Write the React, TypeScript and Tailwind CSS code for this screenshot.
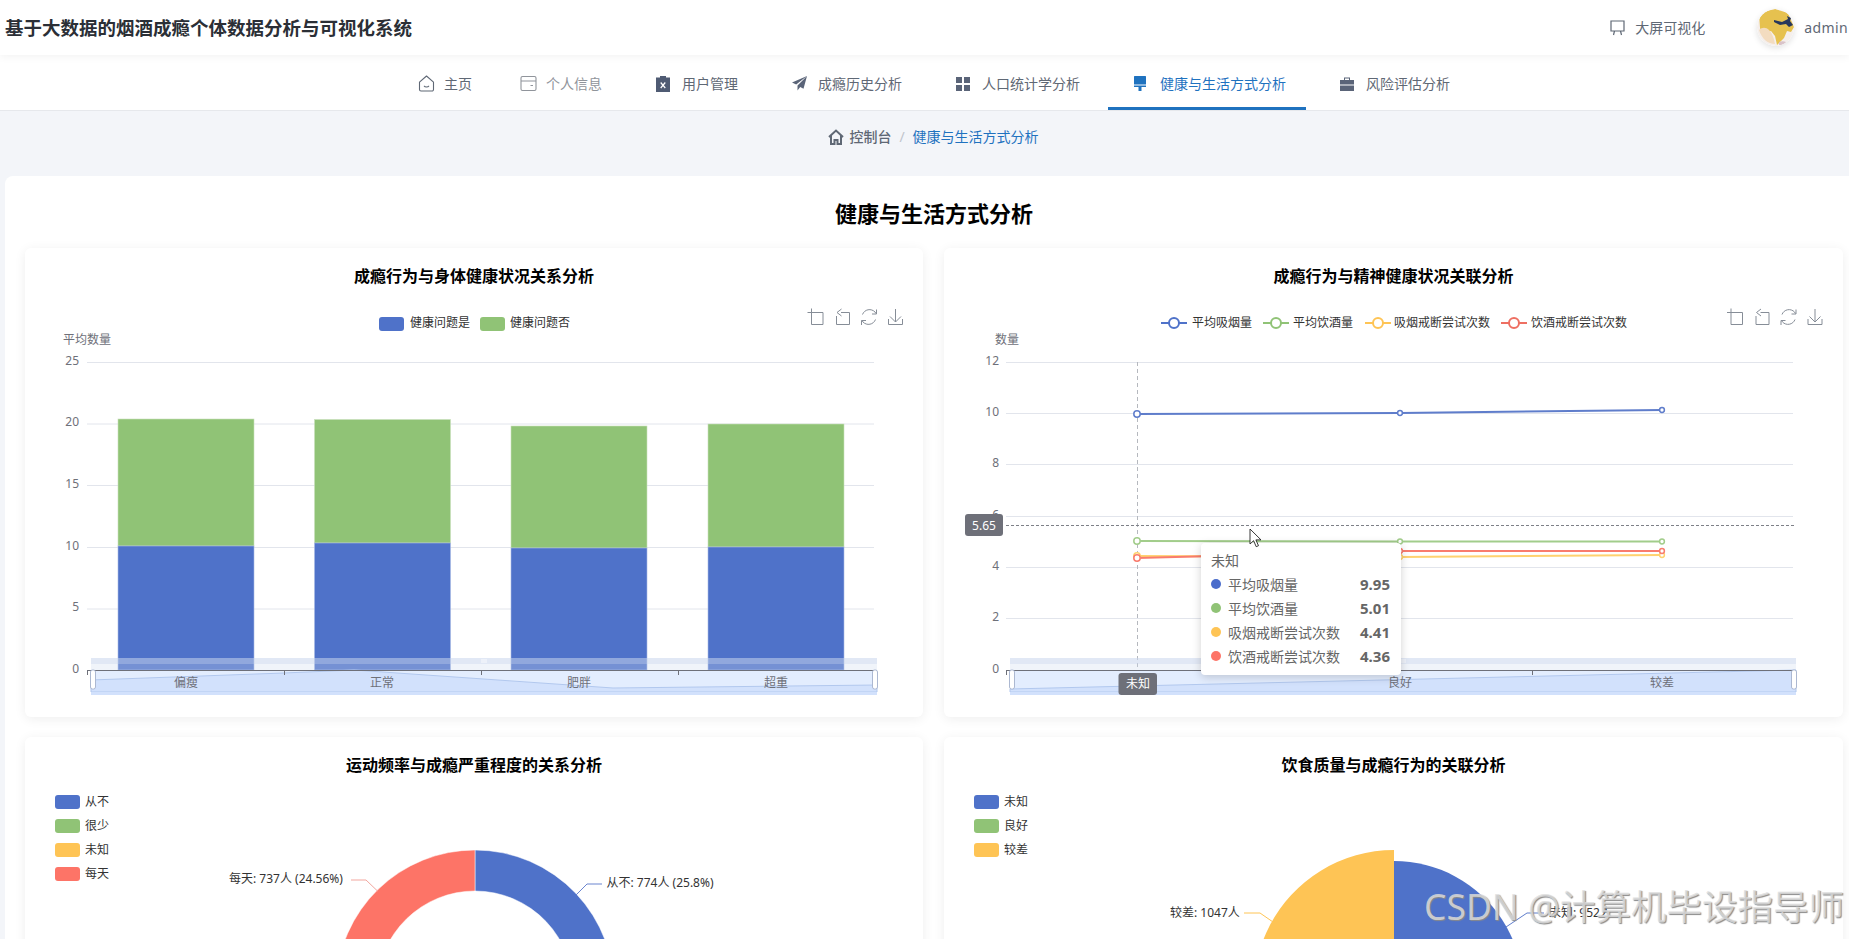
import React from "react";

const BLUE = "#4f72c9";
const GREEN = "#90c376";
const YELLOW = "#fec455";
const RED = "#fd7467";
const AXIS = "#6e7079";

function arc(cx: number, cy: number, R: number, r: number, a0: number, a1: number) {
  const p = (rad: number, a: number) => {
    const t = (a * Math.PI) / 180;
    return `${(cx + rad * Math.sin(t)).toFixed(2)} ${(cy - rad * Math.cos(t)).toFixed(2)}`;
  };
  const large = a1 - a0 > 180 ? 1 : 0;
  if (r === 0) return `M${cx} ${cy} L${p(R, a0)} A${R} ${R} 0 ${large} 1 ${p(R, a1)} Z`;
  return `M${p(R, a0)} A${R} ${R} 0 ${large} 1 ${p(R, a1)} L${p(r, a1)} A${r} ${r} 0 ${large} 0 ${p(r, a0)} Z`;
}

const Label = ({ x, y, children, anchor = "start", fill = "#333", white = false }: { x: number; y: number; children: React.ReactNode; anchor?: "start" | "middle" | "end"; fill?: string; white?: boolean }) => (
  <text x={x} y={y - 1} textAnchor={anchor} dominantBaseline="central" fill={white ? "#fff" : fill} className="text-[12px]">
    {children}
  </text>
);

const HomeIcon = () => (
  <svg width="17" height="17" viewBox="0 0 17 17" fill="none" stroke="currentColor" strokeWidth="1.1">
    <path d="M1.5 7.2 8.5 1l7 6.2v7.3a1.5 1.5 0 0 1-1.5 1.5H3a1.5 1.5 0 0 1-1.5-1.5z" strokeLinejoin="round" />
    <path d="M6.3 11.2c.6 1 3.8 1 4.4 0" strokeLinecap="round" />
  </svg>
);
const WalletIcon = () => (
  <svg width="17" height="17" viewBox="0 0 17 17" fill="none" stroke="currentColor" strokeWidth="1.1">
    <rect x="1" y="1.5" width="15" height="14" rx="1.5" />
    <path d="M1 6h15M10.5 10.5H13" />
  </svg>
);
const ClipIcon = () => (
  <svg width="14" height="17" viewBox="0 0 14 17">
    <path d="M0 2.5h4V1h6v1.5h4V17H0z" fill="#4f5b73" />
    <path d="M4.7 7.5l4.6 5.5M9.3 7.5l-4.6 5.5" stroke="#fff" strokeWidth="1.2" />
  </svg>
);
const PlaneIcon = () => (
  <svg width="15" height="15" viewBox="0 0 15 15" fill="#5a6478">
    <path d="M15 0 0 6.5l4.2 2L15 0zM15 0 5.5 9.5V14.5l2.7-3.4 3.3 1.6z" />
  </svg>
);
const GridIcon = () => (
  <svg width="14" height="14" viewBox="0 0 14 14" fill="#5a6478">
    <rect width="6" height="6" />
    <rect x="8" width="6" height="6" />
    <rect y="8" width="6" height="6" />
    <rect x="8" y="8" width="6" height="6" />
  </svg>
);
const BrushIcon = () => (
  <svg width="12" height="15" viewBox="0 0 12 15" fill="#1f72bf">
    <rect width="12" height="8.5" rx="0.5" />
    <rect y="9.5" width="12" height="1.5" />
    <path d="M4.5 11h3v4h-3z" />
  </svg>
);
const CaseIcon = () => (
  <svg width="14" height="14" viewBox="0 0 14 14" fill="#5a6478">
    <path d="M4 3V.5h6V3H9V1.5H5V3z" />
    <path d="M0 3h14v4.6H0zM0 8.6h14V14H0z" />
  </svg>
);

const navItems: { label: string; icon: React.ReactNode; cls: string; active?: boolean }[] = [
  { label: "主页", icon: <HomeIcon />, cls: "text-[#5f6875] mr-[-6px] pt-[2px]" },
  { label: "个人信息", icon: <WalletIcon />, cls: "text-[#90949b] pt-[2px]" },
  { label: "用户管理", icon: <ClipIcon />, cls: "text-[#5f6875] pt-[2px]" },
  { label: "成瘾历史分析", icon: <PlaneIcon />, cls: "text-[#5f6875] pt-[2px]" },
  { label: "人口统计学分析", icon: <GridIcon />, cls: "text-[#5f6875] pt-[2px]" },
  { label: "健康与生活方式分析", icon: <BrushIcon />, cls: "text-[#1f72bf] border-[#1f72bf] border-b-[3px] pt-[5px]" },
  { label: "风险评估分析", icon: <CaseIcon />, cls: "text-[#5f6875] pt-[2px]" },
];

const Toolbox = ({ dx = 0 }: { dx?: number }) => (
  <g transform={`translate(${dx} -1)`} fill="none" stroke="#868d97" strokeWidth="1">
    <path d="M807.5 313.5H823V325.5H811.5V309.5" />
    <path d="M841 313.5H849.5V325.5H836.5V317M841.5 310 837 313.5l4.5 3.5" />
    <path d="M862.5 315.5a7.5 7.5 0 0 1 12.5-2.5l1 1.5M875.5 320.5a7.5 7.5 0 0 1-12.5 2.5l-1-1.5M876.5 310.5v4.5h-4.5M861.5 326v-4.5h4.5" />
    <path d="M895.5 310v13M890 317.5l5.5 5.5 5.5-5.5M888.5 320v5.5h14V320" />
  </g>
);

const Slider = ({ x0, x1, area, ticks, labels }: { x0: number; x1: number; area: string; ticks: number[]; labels: [number, string][] }) => (
  <g>
    <rect x={x0} y={658} width={x1 - x0} height={6} fill="#c9d5ec" fillOpacity="0.55" />
    <rect x={x0} y={664} width={x1 - x0} height={6} fill="#cdd9f0" fillOpacity="0.3" />
    <rect x={x0} y={670} width={x1 - x0} height={25} fill="#e3edfe" />
    <path d={area} fill="#d2e1fc" stroke="#b2c8ee" strokeWidth="1" />
    <rect x={x0} y={692} width={x1 - x0} height={3} fill="#d2e1fc" />
    <path d={`M${ticks[0]} 670.5H${ticks[ticks.length - 1]}`} stroke={AXIS} strokeWidth="1" />
    {ticks.map((t) => (
      <path key={t} d={`M${t + 0.5} 670v5`} stroke={AXIS} strokeWidth="1" />
    ))}
    {labels.map(([x, s]) => (
      <Label key={s} x={x} y={683} anchor="middle" fill={AXIS}>
        {s}
      </Label>
    ))}
    <rect x={x0 - 0.5} y={670} width={5} height={19} rx={2} fill="#fff" stroke="#acb8d1" />
    <rect x={x1 - 4.5} y={670} width={5} height={19} rx={2} fill="#fff" stroke="#acb8d1" />
    <path d={`M${(x0 + x1) / 2 - 2} 659v4M${(x0 + x1) / 2} 659v4M${(x0 + x1) / 2 + 2} 659v4`} stroke="#fff" strokeWidth="0.8" />
  </g>
);

const BarChart = () => {
  const ticks: [number, string][] = [[362, "25"], [423.5, "20"], [485, "15"], [547, "10"], [608.5, "5"], [670, "0"]];
  const bars = [
    { x: 118, g: 419, b: 546 },
    { x: 314.5, g: 419.5, b: 543 },
    { x: 511, g: 426, b: 548 },
    { x: 708, g: 424, b: 547 },
  ];
  return (
    <svg viewBox="25 306 898 411" className="block w-[898px] h-[411px]">
      <rect x="379" y="317" width="25" height="14" rx="3" fill={BLUE} />
      <Label x={410} y={323}>健康问题是</Label>
      <rect x="480" y="317" width="25" height="14" rx="3" fill={GREEN} />
      <Label x={510} y={323}>健康问题否</Label>
      <Toolbox />
      <Label x={63} y={340} fill={AXIS}>平均数量</Label>
      {ticks.map(([y, s]) => (
        <g key={s}>
          <path d={`M87 ${y + 0.5}H874`} stroke="#e2e5ec" strokeWidth="1" />
          <Label x={79} y={y - 1} anchor="end" fill={AXIS}>{s}</Label>
        </g>
      ))}
      {bars.map((b) => (
        <g key={b.x}>
          <rect x={b.x} y={b.g} width={136} height={b.b - b.g} fill={GREEN} stroke="#c9dfbc" strokeWidth="0.6" />
          <rect x={b.x} y={b.b} width={136} height={670 - b.b} fill={BLUE} stroke="#a8b9e4" strokeWidth="0.6" />
        </g>
      ))}
      <Slider
        x0={91}
        x1={877}
        area="M91 680 L284 673 L354 670 L613 688 L877 685 V692 H91 Z"
        ticks={[87, 284, 481, 678, 874]}
        labels={[[186, "偏瘦"], [382, "正常"], [579, "肥胖"], [776, "超重"]]}
      />
    </svg>
  );
};

const LineChart = () => {
  const ticks: [number, string][] = [[362, "12"], [413, "10"], [464, "8"], [516, "6"], [567, "4"], [618, "2"], [670, "0"]];
  const xs = [1137, 1400, 1662];
  const series = [
    { c: "#5f7dcb", ys: [414, 413, 410] },
    { c: "#a2cd8b", ys: [541, 541.5, 541.5] },
    { c: "#ffd26f", ys: [556, 557, 555] },
    { c: "#f97c6e", ys: [558, 551, 551] },
  ];
  const legend: [number, number, string, string][] = [
    [1161, 1192, "平均吸烟量", BLUE],
    [1263, 1293, "平均饮酒量", GREEN],
    [1365, 1394, "吸烟戒断尝试次数", YELLOW],
    [1501, 1531, "饮酒戒断尝试次数", "#ee6f62"],
  ];
  return (
    <svg viewBox="944 306 899 411" className="block w-[899px] h-[411px]">
      {legend.map(([ix, tx, s, c]) => (
        <g key={s}>
          <path d={`M${ix} 323h26`} stroke={c} strokeWidth="2" />
          <circle cx={ix + 13} cy={323} r={5} fill="#fff" stroke={c} strokeWidth="2" />
          <Label x={tx} y={323}>{s}</Label>
        </g>
      ))}
      <Toolbox dx={919.5} />
      <Label x={995} y={340} fill={AXIS}>数量</Label>
      {ticks.map(([y, s]) => (
        <g key={s}>
          <path d={`M1006 ${y + 0.5}H1793`} stroke="#e2e5ec" strokeWidth="1" />
          <Label x={999} y={y - 1} anchor="end" fill={AXIS}>{s}</Label>
        </g>
      ))}
      <path d="M1137.5 362V670" stroke="#b5b8be" strokeWidth="1" strokeDasharray="4 3" />
      {series.map((s) => (
        <polyline key={s.c} points={s.ys.map((y, i) => `${xs[i]},${y}`).join(" ")} fill="none" stroke={s.c} strokeWidth="2" />
      ))}
      {series.map((s) =>
        s.ys.map((y, i) => (
          <circle key={s.c + i} cx={xs[i]} cy={y} r={i === 0 ? 3.2 : 2.4} fill="#fff" stroke={s.c} strokeWidth="1.5" />
        ))
      )}
      <path d="M1006 525.5H1795" stroke="#7d8087" strokeWidth="1" strokeDasharray="3 2" />
      <rect x="965" y="514" width="38" height="22" rx="3" fill={AXIS} />
      <Label x={984} y={526} anchor="middle" white>5.65</Label>
      <Slider
        x0={1010}
        x1={1796}
        area="M1010 689 L1796 670 V692 H1010 Z"
        ticks={[1006, 1269, 1532, 1793]}
        labels={[[1400, "良好"], [1662, "较差"]]}
      />
      <rect x="1118.5" y="673" width="38.5" height="22" rx="3" fill={AXIS} />
      <Label x={1138} y={684} anchor="middle" white>未知</Label>
    </svg>
  );
};

const Tooltip = () => {
  const rows: [string, string, string][] = [
    ["平均吸烟量", "9.95", "#4a6ccb"],
    ["平均饮酒量", "5.01", GREEN],
    ["吸烟戒断尝试次数", "4.41", YELLOW],
    ["饮酒戒断尝试次数", "4.36", RED],
  ];
  return (
    <div className="absolute left-[257px] top-[295px] w-[200px] h-[132px] bg-white rounded-[4px] shadow-[0_2px_10px_rgba(0,0,0,0.18)] px-[10px] pt-[6px] z-10 text-[14px] text-[#666]">
      <div className="h-[24px] leading-[24px]">未知</div>
      {rows.map(([a, b, c]) => (
        <div key={a} className="h-[24px] -translate-y-[1px] flex items-center">
          <span className="w-[10px] h-[10px] rounded-full mr-[7px]" style={{ backgroundColor: c }} />
          <span className="flex-1">{a}</span>
          <span className="font-bold text-[15px] mr-[1px]">{b}</span>
        </div>
      ))}
    </div>
  );
};

const Cursor = () => (
  <svg width="14" height="20" viewBox="0 0 14 20" className="absolute left-[305px] top-[280px] z-20">
    <path d="M1 1v15l3.6-3.3 2.6 6 2.3-1-2.6-5.8H12z" fill="#fff" stroke="#222" strokeWidth="0.9" strokeLinejoin="round" />
  </svg>
);

const VLegend = ({ x, items }: { x: number; items: [string, string][] }) => (
  <g>
    {items.map(([s, c], i) => (
      <g key={s}>
        <rect x={x} y={795 + i * 24} width={25} height={14} rx={3} fill={c} />
        <Label x={x + 30} y={802 + i * 24}>{s}</Label>
      </g>
    ))}
  </g>
);

const Donut = () => (
  <svg viewBox="25 795 898 411" className="block w-[898px] h-[411px]">
    <VLegend x={55} items={[["从不", BLUE], ["很少", GREEN], ["未知", YELLOW], ["每天", RED]]} />
    <path d={arc(475, 989, 139, 98, 0, 92.9)} fill={BLUE} stroke="#fff" strokeWidth="0.5" />
    <path d={arc(475, 989, 139, 98, 92.9, 182)} fill={GREEN} stroke="#fff" strokeWidth="0.5" />
    <path d={arc(475, 989, 139, 98, 182, 271.6)} fill={YELLOW} stroke="#fff" strokeWidth="0.5" />
    <path d={arc(475, 989, 139, 98, 271.6, 360)} fill={RED} stroke="#fff" strokeWidth="0.5" />
    <Label x={229} y={879}>每天: 737人 (24.56%)</Label>
    <polyline points="351,880 366,880 377.5,891" fill="none" stroke="#f2a79f" strokeWidth="1" />
    <Label x={606.5} y={883}>从不: 774人 (25.8%)</Label>
    <polyline points="576,895 587,884 602,884" fill="none" stroke="#6b85cf" strokeWidth="1" />
  </svg>
);

const Pie = () => (
  <svg viewBox="944 795 899 411" className="block w-[899px] h-[411px]">
    <VLegend x={974} items={[["未知", BLUE], ["良好", GREEN], ["较差", YELLOW]]} />
    <path d={arc(1394, 990, 129, 0, 0, 114)} fill={BLUE} />
    <path d={arc(1394, 990, 100, 0, 114, 234)} fill={GREEN} />
    <path d={arc(1394, 990, 140, 0, 234, 360)} fill={YELLOW} />
    <Label x={1170} y={913}>较差: 1047人</Label>
    <polyline points="1244,913 1260,913 1273,922" fill="none" stroke={YELLOW} strokeWidth="1" />
    <Label x={1549} y={913}>未知: 952人</Label>
    <polyline points="1506,927 1527,913 1544,913" fill="none" stroke="#5f7dcb" strokeWidth="1" />
  </svg>
);

const Card = ({ title, children }: { title: string; children: React.ReactNode }) => (
  <section className="relative h-[469px] bg-white rounded-[6px] shadow-[0_2px_12px_rgba(0,0,0,0.07)]">
    <h3 className="h-[58px] pb-[2px] flex items-center justify-center text-[16px] font-bold text-black">{title}</h3>
    {children}
  </section>
);

export default function App() {
  return (
    <div className="relative h-[939px] overflow-hidden bg-[#f3f5f9] font-['Noto_Sans','Noto_Sans_CJK_SC',sans-serif]">
      <header className="relative z-10 h-[55px] bg-white shadow-[0_2px_8px_rgba(0,0,0,0.05)] flex items-center justify-between pl-[5px] pr-[1px]">
        <h1 className="text-[18.5px] font-bold text-[#2b2f36] whitespace-nowrap">基于大数据的烟酒成瘾个体数据分析与可视化系统</h1>
        <div className="flex items-center text-[14px] text-[#5f6875]">
          <svg width="15" height="16" viewBox="0 0 15 16" fill="none" stroke="currentColor" strokeWidth="1.2" className="mr-[10px]">
            <path d="M1 1h13v10H1zM4.5 11l-1 4M10.5 11l1 4" />
          </svg>
          <span className="mr-[52px]">大屏可视化</span>
          <svg width="37" height="37" viewBox="0 0 37 37" className="mr-[10px] rounded-full shadow-[0_2px_6px_rgba(0,0,0,0.12)]">
            <clipPath id="av">
              <circle cx="18.5" cy="18.5" r="18.5" />
            </clipPath>
            <g clipPath="url(#av)">
              <rect width="37" height="37" fill="#f5efec" />
              <path d="M2 4 18 0l13 4 6 14-3 5-4-1-3 7-7 7-2-9-4-5-9 3-2-6z" fill="#e6c14f" />
              <path d="M2 21c3-3 7-3 10 0 3 3 5 8 6 14-7 0-13-5-16-14z" fill="#f3dcc0" />
              <path d="M17 11l8 2 6-3-1-3 4 2-1 3 3 4-4 2-3-3-6 1-6-3z" fill="#27375c" />
              <path d="M22 33c2-1 5-1 7 0l-2 3h-5z" fill="#d9c3c9" />
            </g>
          </svg>
          <span className="tracking-[0.4px]">admin</span>
        </div>
      </header>

      <nav className="h-[56px] bg-white border-b border-[#e6e8ec] flex justify-center pl-[13px] gap-[8px]">
        {navItems.map((n) => (
          <div key={n.label} className={`h-[55px] flex items-center pl-[26px] pr-[20px] text-[14px] whitespace-nowrap ${n.cls}`}>
            <span className="w-[26px] flex items-center">{n.icon}</span>
            {n.label}
          </div>
        ))}
      </nav>

      <div className="h-[65px] flex justify-center items-start pt-[16px] pl-[18px] text-[14px] leading-[20px]">
        <svg width="16" height="16" viewBox="0 0 16 16" fill="none" stroke="#5f6875" strokeWidth="2" className="mr-[5px] mt-[2px]">
          <path d="M1 8 8 1.5 15 8M3 6.5V15h3.5v-4h3v4H13V6.5" />
        </svg>
        <span className="font-medium text-[#5f6875]">控制台</span>
        <span className="mx-[8px] text-[#c0c4cc]">/</span>
        <span className="text-[#1f72bf]">健康与生活方式分析</span>
      </div>

      <main className="ml-[5px] bg-white rounded-tl-[8px] pl-[20px] pr-[6px]">
        <h2 className="h-[72px] pt-[2px] flex items-center justify-center text-[22px] font-bold text-black">健康与生活方式分析</h2>
        <div className="grid grid-cols-[898px_899px] gap-x-[21px] gap-y-[20px]">
          <Card title="成瘾行为与身体健康状况关系分析">
            <BarChart />
          </Card>
          <Card title="成瘾行为与精神健康状况关联分析">
            <LineChart />
            <Tooltip />
            <Cursor />
          </Card>
          <Card title="运动频率与成瘾严重程度的关系分析">
            <Donut />
          </Card>
          <Card title="饮食质量与成瘾行为的关联分析">
            <Pie />
          </Card>
        </div>
      </main>

      <div className="absolute left-[1424px] top-[881px] z-30 text-[35.5px] leading-[50px] whitespace-nowrap text-[#dfdfdf]/80 [text-shadow:1px_1px_1px_#8a8a8a]">
        CSDN @计算机毕设指导师
      </div>
    </div>
  );
}
